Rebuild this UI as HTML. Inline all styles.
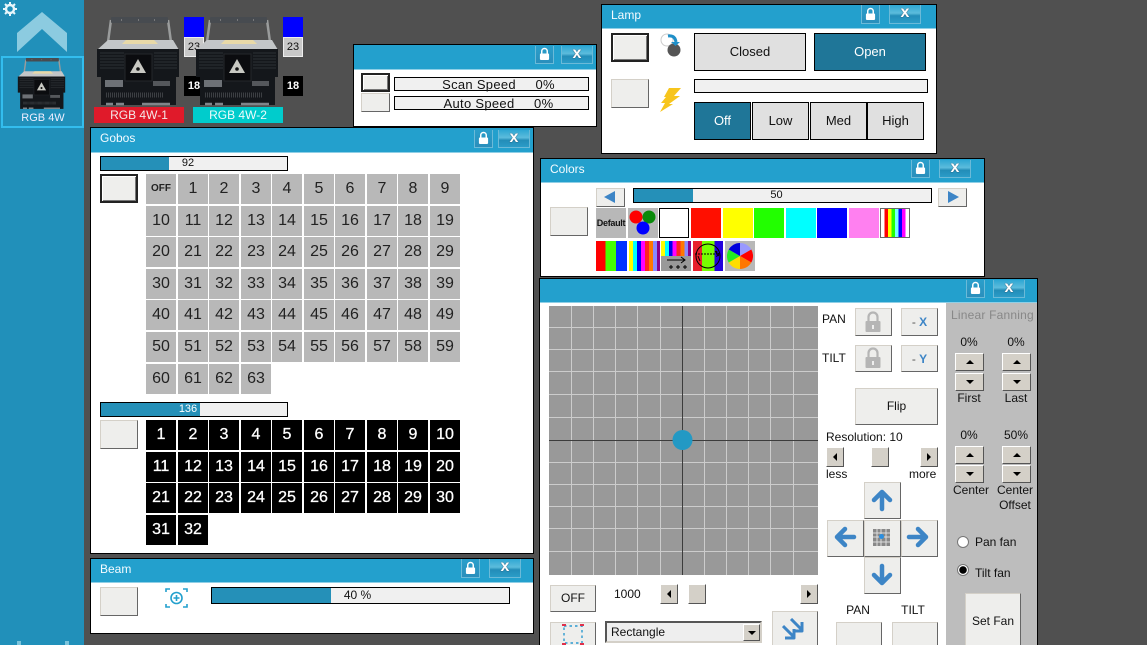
<!DOCTYPE html>
<html><head><meta charset="utf-8"><style>
html,body{margin:0;padding:0;width:1147px;height:645px;overflow:hidden;background:#505050}
body{position:relative;font-family:"Liberation Sans",sans-serif;font-size:12px;color:#111}
#r{position:absolute;left:0;top:0;width:1147px;height:645px;overflow:hidden}
#r div,#r span,#r svg{position:absolute;box-sizing:border-box;display:block}
#r .g{display:grid}
#r .g div{position:static}
.w{background:#fff;border:1px solid #000}
.t{background:#23a0cd;border-bottom:1px solid #8fcfe6;color:#f4fbff;font-size:12px;padding:2px 0 0 9px;line-height:16px}
.lk{background:linear-gradient(#2a9fcb,#2a8fbc);border:1px solid #6bbad8;border-top:0}
.cl{background:linear-gradient(#2ea7d3 0,#5cbcdc 45%,#238db8 60%,#2a9cc8);border:1px solid #6bbad8;border-top:0;color:#fff;font:bold 16px/16px "Liberation Sans",sans-serif;text-align:center;text-shadow:0 0 1px #223}
.b{background:#eeeeec;border:1px solid;border-color:#d4d0c8 #666 #666 #d4d0c8;text-align:center}
.bs{background:#eeeeec;border:2px solid #222;box-shadow:inset 1px 1px 0 #fff,inset -1px -1px 0 #777}
.sl{background:#f0f0f0;border:1px solid #000;text-align:center;font-size:11px;line-height:13px}
.sl i{position:absolute;left:0;top:0;bottom:0;background:#2590b8;display:block}
.sl span{left:0;right:12px;top:0}
.g{text-align:center}
.g div{width:30px;height:30px;font-size:16px;line-height:29px}
.gy div{background:#b8b8b8;color:#222}
.bk div{background:#000;color:#fff;-webkit-text-stroke:.3px #fff}
.tb{border:1px solid #000;background:#e0e0e0;text-align:center;font-size:13px}
.on{background:#1f7698;color:#fff}
.s{width:30px;height:30px}
.mn{background:#d4d0c8;border:1px solid;border-color:#fff #555 #555 #fff}
.up::after,.dn::after,.lf::after,.rt::after{content:"";position:absolute;left:50%;top:50%;width:0;height:0;border:4px solid transparent}
.up::after{margin:-6px 0 0 -4px;border-bottom-color:#000}
.dn::after{margin:-2px 0 0 -4px;border-top-color:#000}
.lf::after{margin:-4px 0 0 -6px;border-right-color:#000}
.rt::after{margin:-4px 0 0 -2px;border-left-color:#000}
.l{white-space:nowrap;line-height:14px}
.c{text-align:center}
</style></head><body><div id="r">
<svg width="0" height="0" style="left:0;top:0"><defs>
<symbol id="dev" viewBox="0 0 84 90">
<path d="M15 3L12 25M72 3L75 25" fill="none" stroke="#9a9c9c" stroke-width="2.500"/>
<rect x="15" y="0" width="57" height="6" rx="1" fill="#474b50"/>
<path d="M25 3h1M42 3h1M58 3h1" stroke="#888" stroke-width="1.500"/>
<path d="M12 23H77L83 33H1Z" fill="#c3c6c8"/>
<path d="M30 23H58L62 27H26Z" fill="#e8d9a8"/>
<path d="M1 32H83V60H80V88H5V60H1Z" fill="#14171b"/>
<path d="M4 36H28M4 39H28M4 42H28M4 45H28M4 48H28M4 51H28M58 36H81M58 39H81M58 42H81M58 45H81M58 48H81M58 51H81" stroke="#2d3035" stroke-width="1"/>
<rect x="29" y="37" width="27" height="27" fill="#0b0c0f" stroke="#25272b"/>
<path d="M42 42L50 56H34Z" fill="#c8c8c2"/>
<circle cx="42" cy="52" r="1.800" fill="#111"/>
<path d="M9 63h18v7h-18z" fill="#6d7176"/>
<path d="M57 64h17v5h-17z" fill="#54575b"/>
<path d="M10 78H68" stroke="#3c3f43" stroke-width="5" stroke-dasharray="1 1"/>
<path d="M10 87h7M20 87h8M46 87h28" stroke="#80858a" stroke-width="2.500"/>
</symbol>
<symbol id="lock" viewBox="0 0 12 15"><path d="M3 7V4.500a3 3 0 0 1 6 0V7" fill="none" stroke="#fff" stroke-width="1.600"/><rect x="1" y="7" width="10" height="7" rx="1" fill="#fff"/></symbol>
<symbol id="glock" viewBox="0 0 16 22"><path d="M3.500 10V6a4.500 4.500 0 0 1 9 0v4" fill="none" stroke="#b5b5b5" stroke-width="2.200"/><rect x="0.500" y="10" width="15" height="11" rx="1" fill="#b5b5b5"/><rect x="7" y="14" width="2" height="4" fill="#eee"/></symbol>
<symbol id="au" viewBox="0 0 24 24"><path d="M12 21V5M4 12L12 4L20 12" fill="none" stroke="#3d85c6" stroke-width="4.500" stroke-linecap="round" stroke-linejoin="round"/></symbol>
</defs></svg>

<!-- sidebar -->
<div style="left:0;top:0;width:84px;height:645px;background:#2190ba"></div>
<svg style="left:3px;top:2px" width="14" height="14" viewBox="0 0 14 14"><circle cx="7" cy="7" r="4" fill="none" stroke="#e8f6fb" stroke-width="2.400"/><path d="M7 0V3M7 11V14M0 7H3M11 7H14M2 2L4 4M10 10L12 12M12 2L10 4M4 10L2 12" stroke="#e8f6fb" stroke-width="2"/></svg>
<svg style="left:17px;top:11px" width="51" height="42" viewBox="0 0 51 42"><path d="M0 22L25 1L50 22V41L25 18L0 41Z" fill="#8ccbe0"/></svg>
<div style="left:1px;top:56px;width:83px;height:72px;border:2px solid #33bdee"></div>
<svg style="left:13px;top:58px" width="57" height="52"><use href="#dev" width="57" height="52"/></svg>
<div class="l c" style="left:1px;top:111px;width:84px;color:#eef;font-size:11px">RGB 4W</div>
<div style="left:17px;top:641px;width:4px;height:4px;background:#7cc4dc"></div>
<div style="left:65px;top:641px;width:4px;height:4px;background:#7cc4dc"></div>

<!-- fixtures -->
<div style="left:184px;top:17px;width:20px;height:20px;background:#0000ff"></div>
<div class="c" style="left:184px;top:37px;width:20px;height:20px;background:#c8c8c8;border:1px solid #eee;line-height:19px;font-size:11px">23</div>
<div class="c" style="left:184px;top:76px;width:20px;height:20px;background:#000;color:#fff;line-height:20px;font-size:11px;font-weight:bold">18</div>
<div style="left:283px;top:17px;width:20px;height:20px;background:#0000ff"></div>
<div class="c" style="left:283px;top:37px;width:20px;height:20px;background:#c8c8c8;border:1px solid #eee;line-height:19px;font-size:11px">23</div>
<div class="c" style="left:283px;top:76px;width:20px;height:20px;background:#000;color:#fff;line-height:20px;font-size:11px;font-weight:bold">18</div>
<svg style="left:96px;top:17px" width="84" height="90"><use href="#dev" width="84" height="90"/></svg>
<svg style="left:195px;top:17px" width="84" height="90"><use href="#dev" width="84" height="90"/></svg>
<div class="c" style="left:94px;top:107px;width:90px;height:16px;background:#e01a2a;color:#f4e8e8;line-height:16px;font-size:12px">RGB 4W-1</div>
<div class="c" style="left:193px;top:107px;width:90px;height:16px;background:#00cccc;color:#effcfc;line-height:16px;font-size:12px">RGB 4W-2</div>

<!-- speed -->
<div class="w" style="left:353px;top:44px;width:244px;height:83px"></div>
<div class="t" style="left:354px;top:45px;width:242px;height:25px"></div>
<div class="lk" style="left:535px;top:46px;width:19px;height:18px"></div><svg style="left:539px;top:47px" width="11" height="14"><use href="#lock" width="11" height="14"/></svg>
<div class="cl" style="left:561px;top:46px;width:32px;height:18px">x</div>
<div class="bs" style="left:361px;top:73px;width:29px;height:19px"></div>
<div class="b" style="left:361px;top:93px;width:29px;height:19px"></div>
<div class="sl" style="left:394px;top:77px;width:195px;height:14px;font-size:13px;line-height:14px;letter-spacing:.3px;padding-left:14px">Scan Speed &nbsp;&nbsp;&nbsp; 0%</div>
<div class="sl" style="left:394px;top:96px;width:195px;height:14px;font-size:13px;line-height:14px;letter-spacing:.3px;padding-left:14px">Auto Speed &nbsp;&nbsp;&nbsp; 0%</div>

<!-- lamp -->
<div class="w" style="left:601px;top:4px;width:336px;height:150px"></div>
<div class="t" style="left:602px;top:5px;width:334px;height:24px">Lamp</div>
<div class="lk" style="left:861px;top:5px;width:19px;height:19px"></div><svg style="left:865px;top:7px" width="11" height="14"><use href="#lock" width="11" height="14"/></svg>
<div class="cl" style="left:889px;top:5px;width:32px;height:19px">x</div>
<div class="bs" style="left:611px;top:33px;width:38px;height:29px"></div>
<div class="b" style="left:611px;top:79px;width:38px;height:29px"></div>
<svg style="left:657px;top:32px" width="26" height="26"><circle cx="10" cy="8" r="6" fill="#fff" stroke="#ccc"/><circle cx="17" cy="18" r="6.500" fill="#555"/><path d="M11 4Q18 3 19 10" fill="none" stroke="#1f8fc8" stroke-width="3"/><path d="M14 10h9l-4.500 4z" fill="#1f8fc8"/></svg>
<svg style="left:659px;top:88px" width="23" height="25"><path d="M10 0H22L15 8H21L10 16H14L1 24L6 15H2L7 9H5Z" fill="#f7c51c"/></svg>
<div class="tb" style="left:694px;top:33px;width:112px;height:38px;line-height:36px">Closed</div>
<div class="tb on" style="left:814px;top:33px;width:112px;height:38px;line-height:36px">Open</div>
<div class="sl" style="left:694px;top:79px;width:234px;height:14px"></div>
<div class="tb on" style="left:694px;top:102px;width:57px;height:38px;line-height:36px">Off</div>
<div class="tb" style="left:752px;top:102px;width:57px;height:38px;line-height:36px">Low</div>
<div class="tb" style="left:810px;top:102px;width:57px;height:38px;line-height:36px">Med</div>
<div class="tb" style="left:867px;top:102px;width:57px;height:38px;line-height:36px">High</div>

<!-- gobos -->
<div class="w" style="left:90px;top:127px;width:444px;height:427px"></div>
<div class="t" style="left:91px;top:128px;width:442px;height:25px">Gobos</div>
<div class="lk" style="left:474px;top:130px;width:19px;height:18px"></div><svg style="left:478px;top:131px" width="11" height="14"><use href="#lock" width="11" height="14"/></svg>
<div class="cl" style="left:498px;top:130px;width:32px;height:18px">x</div>
<div class="sl" style="left:100px;top:156px;width:188px;height:15px"><i style="width:68px"></i><span>92</span></div>
<div class="bs" style="left:100px;top:174px;width:38px;height:29px"></div>
<div class="g gy" style="left:146px;top:174px;grid-template-columns:32px 31px 32px 31px 32px 31px 32px 31px 32px 31px;grid-template-rows:32px 31px 32px 31px 32px 32px 30px">
<div style="font:bold 10px/29px 'Liberation Sans',sans-serif">OFF</div><div>1</div><div>2</div><div>3</div><div>4</div><div>5</div><div>6</div><div>7</div><div>8</div><div>9</div>
<div>10</div><div>11</div><div>12</div><div>13</div><div>14</div><div>15</div><div>16</div><div>17</div><div>18</div><div>19</div>
<div>20</div><div>21</div><div>22</div><div>23</div><div>24</div><div>25</div><div>26</div><div>27</div><div>28</div><div>29</div>
<div>30</div><div>31</div><div>32</div><div>33</div><div>34</div><div>35</div><div>36</div><div>37</div><div>38</div><div>39</div>
<div>40</div><div>41</div><div>42</div><div>43</div><div>44</div><div>45</div><div>46</div><div>47</div><div>48</div><div>49</div>
<div>50</div><div>51</div><div>52</div><div>53</div><div>54</div><div>55</div><div>56</div><div>57</div><div>58</div><div>59</div>
<div>60</div><div>61</div><div>62</div><div>63</div>
</div>
<div class="sl" style="left:100px;top:402px;width:188px;height:15px;color:#fff"><i style="width:99px"></i><span>136</span></div>
<div class="b" style="left:100px;top:420px;width:38px;height:29px"></div>
<div class="g bk" style="left:146px;top:420px;grid-template-columns:32px 31px 32px 31px 32px 31px 32px 31px 32px 31px;grid-template-rows:32px 31px 32px 30px">
<div>1</div><div>2</div><div>3</div><div>4</div><div>5</div><div>6</div><div>7</div><div>8</div><div>9</div><div>10</div>
<div>11</div><div>12</div><div>13</div><div>14</div><div>15</div><div>16</div><div>17</div><div>18</div><div>19</div><div>20</div>
<div>21</div><div>22</div><div>23</div><div>24</div><div>25</div><div>26</div><div>27</div><div>28</div><div>29</div><div>30</div>
<div>31</div><div>32</div>
</div>

<!-- beam -->
<div class="w" style="left:90px;top:558px;width:444px;height:76px"></div>
<div class="t" style="left:91px;top:559px;width:442px;height:24px">Beam</div>
<div class="lk" style="left:461px;top:559px;width:19px;height:19px"></div><svg style="left:465px;top:561px" width="11" height="14"><use href="#lock" width="11" height="14"/></svg>
<div class="cl" style="left:489px;top:559px;width:32px;height:19px">x</div>
<div class="b" style="left:100px;top:587px;width:38px;height:29px"></div>
<svg style="left:165px;top:588px" width="23" height="20" fill="none" stroke="#23a0cd" stroke-width="1.600"><circle cx="11.500" cy="10" r="5.500"/><path d="M8.500 10H14.500M11.500 7V13M1 4V1H5M18 1H22V4M1 16V19H5M18 19H22V16"/></svg>
<div class="sl" style="left:211px;top:587px;width:299px;height:17px;font-size:12px;line-height:15px"><i style="width:119px"></i><span style="right:6px">40 %</span></div>

<!-- colors -->
<div class="w" style="left:540px;top:158px;width:445px;height:119px"></div>
<div class="t" style="left:541px;top:159px;width:443px;height:24px">Colors</div>
<div class="lk" style="left:911px;top:160px;width:19px;height:18px"></div><svg style="left:915px;top:161px" width="11" height="14"><use href="#lock" width="11" height="14"/></svg>
<div class="cl" style="left:939px;top:160px;width:32px;height:18px">x</div>
<div class="b" style="left:550px;top:207px;width:38px;height:29px"></div>
<div class="b" style="left:596px;top:188px;width:29px;height:19px"></div><svg style="left:604px;top:191px" width="12" height="12"><path d="M11 0V12L0 6Z" fill="#3d85c6"/></svg>
<div class="sl" style="left:633px;top:188px;width:299px;height:15px"><i style="width:59px"></i><span>50</span></div>
<div class="b" style="left:938px;top:188px;width:29px;height:19px"></div><svg style="left:948px;top:191px" width="12" height="12"><path d="M0 0V12L11 6Z" fill="#3d85c6"/></svg>
<div class="s c" style="left:596px;top:208px;background:#b8b8b8;font:bold 9px/30px 'Liberation Sans',sans-serif;letter-spacing:-.3px">Default</div>
<svg class="s" style="left:628px;top:208px;background:#b8b8b8" width="30" height="30"><circle cx="8" cy="9" r="6.500" fill="#f00"/><circle cx="21" cy="9" r="6.500" fill="#0a8a0a"/><circle cx="15" cy="20" r="6.500" fill="#0000ff"/></svg>
<div class="s" style="left:659px;top:208px;background:#fff;border:1px solid #000"></div>
<div class="s" style="left:691px;top:208px;background:#ff0f00"></div>
<div class="s" style="left:723px;top:208px;background:#ff0"></div>
<div class="s" style="left:754px;top:208px;background:#22ff00"></div>
<div class="s" style="left:786px;top:208px;background:#0ff"></div>
<div class="s" style="left:817px;top:208px;background:#00f"></div>
<div class="s" style="left:849px;top:208px;background:#ff80f0"></div>
<div class="s" style="left:880px;top:208px;border:1px solid #666;background:linear-gradient(90deg,#fff 12%,#f00 12% 25%,#ff0 25% 38%,#2f0 38% 50%,#7ff 50% 63%,#00f 63% 75%,#f0f 75% 87%,#fff 87%)"></div>
<div class="s" style="left:596px;top:241px;width:31px;background:linear-gradient(90deg,#f00 30%,#4f0 30% 65%,#03f 65%)"></div>
<div class="s" style="left:629px;top:241px;width:31px;background:linear-gradient(90deg,#ff0 0 13%,#0ff 13% 26%,#00e 26% 39%,#f0f 39% 52%,#f22 52% 65%,#f70 65% 78%,#88f 78% 90%,#808 90%)"></div>
<div class="s" style="left:661px;top:241px;background:linear-gradient(90deg,#ff0 0 13%,#0ff 13% 26%,#00e 26% 39%,#f0f 39% 52%,#f22 52% 65%,#f70 65% 78%,#88f 78% 90%,#808 90%)"></div>
<div style="left:661px;top:256px;width:30px;height:15px;background:#999"></div>
<svg style="left:661px;top:256px" width="30" height="15"><path d="M6 4H24M20 1L24 4L20 7M8 11H12M10 9V13M15 11H19M17 9V13M22 11H26M24 9V13" fill="none" stroke="#000"/></svg>
<div class="s" style="left:693px;top:241px;background:linear-gradient(90deg,#e8202c 30%,#7f0 30% 72%,#2200dd 72%)"></div>
<svg style="left:693px;top:241px" width="30" height="30" fill="none" stroke="#000"><circle cx="15" cy="15" r="12"/><path d="M2 13H26M23 10L26 13L23 16" stroke-dasharray="2 1"/><path d="M22 10L26 15M5 15L7 20"/></svg>
<svg class="s" style="left:725px;top:241px;background:#b8b8b8" width="30" height="30" viewBox="-15 -15 30 30"><path d="M0 0L0-13A13 13 0 0 1 11.300-6.500Z" fill="#99f"/><path d="M0 0L11.300-6.500A13 13 0 0 1 11.300 6.500Z" fill="#f00"/><path d="M0 0L11.300 6.500A13 13 0 0 1 0 13Z" fill="#f70"/><path d="M0 0L0 13A13 13 0 0 1-11.300 6.500Z" fill="#fd0"/><path d="M0 0L-11.300 6.500A13 13 0 0 1-11.300-6.500Z" fill="#2e2"/><path d="M0 0L-11.300-6.500A13 13 0 0 1 0-13Z" fill="#00d"/></svg>

<!-- position -->
<div class="w" style="left:539px;top:278px;width:499px;height:380px"></div>
<div class="t" style="left:540px;top:279px;width:497px;height:24px"></div>
<div class="lk" style="left:966px;top:280px;width:19px;height:18px"></div><svg style="left:970px;top:281px" width="11" height="14"><use href="#lock" width="11" height="14"/></svg>
<div class="cl" style="left:993px;top:280px;width:32px;height:18px">x</div>
<svg style="left:549px;top:306px" width="269" height="269" shape-rendering="crispEdges"><rect width="269" height="269" fill="#999"/><g stroke="#cccccc" stroke-width="1"><path d="M22.500 0V269M44.500 0V269M66.500 0V269M88.500 0V269M111.500 0V269M155.500 0V269M177.500 0V269M199.500 0V269M221.500 0V269M244.500 0V269M0 21.500H269M0 43.500H269M0 65.500H269M0 88.500H269M0 111.500H269M0 156.500H269M0 178.500H269M0 200.500H269M0 222.500H269M0 245.500H269"/></g><path d="M133.500 0V269M0 134.500H269" stroke="#3c3c3c" stroke-width="1"/><circle cx="133.500" cy="134" r="10" fill="#2399c4" shape-rendering="auto"/></svg>

<div class="l" style="left:822px;top:312px;font-size:12px">PAN</div>
<div class="b" style="left:855px;top:308px;width:37px;height:28px"></div><svg style="left:865px;top:311px" width="16" height="22"><use href="#glock" width="16" height="22"/></svg>
<div class="b" style="left:901px;top:308px;width:37px;height:28px;color:#3d85c6;line-height:27px;font-weight:bold"><span style="position:static;font-weight:normal;color:#555;display:inline">- </span>X</div>
<div class="l" style="left:822px;top:351px;font-size:12px">TILT</div>
<div class="b" style="left:855px;top:345px;width:37px;height:27px"></div><svg style="left:865px;top:347px" width="16" height="22"><use href="#glock" width="16" height="22"/></svg>
<div class="b" style="left:901px;top:345px;width:37px;height:27px;color:#3d85c6;line-height:26px;font-weight:bold"><span style="position:static;font-weight:normal;color:#555;display:inline">- </span>Y</div>
<div class="b" style="left:855px;top:388px;width:83px;height:37px;line-height:35px">Flip</div>
<div class="l" style="left:826px;top:430px">Resolution: 10</div>
<div class="mn lf" style="left:826px;top:447px;width:18px;height:20px"></div>
<div class="mn" style="left:871px;top:447px;width:18px;height:20px"></div>
<div class="mn rt" style="left:920px;top:447px;width:18px;height:20px"></div>
<div class="l" style="left:826px;top:467px">less</div>
<div class="l" style="left:909px;top:467px">more</div>

<div class="b" style="left:864px;top:482px;width:37px;height:37px"></div><svg style="left:870px;top:488px" width="24" height="24"><use href="#au" width="24" height="24"/></svg>
<div class="b" style="left:827px;top:520px;width:37px;height:37px"></div><svg style="left:833px;top:525px;transform:rotate(-90deg)" width="24" height="24"><use href="#au" width="24" height="24"/></svg>
<div class="b" style="left:864px;top:520px;width:37px;height:37px"></div>
<svg style="left:873px;top:529px" width="17" height="17"><path d="M0 0H17V17H0Z" fill="#888"/><path d="M4 0V17M8 0V17M13 0V17M0 4H17M0 8H17M0 13H17" stroke="#ddd"/><circle cx="8.500" cy="7.500" r="2.500" fill="#2b8fe0"/></svg>
<div class="b" style="left:901px;top:520px;width:37px;height:37px"></div><svg style="left:906px;top:525px;transform:rotate(90deg)" width="24" height="24"><use href="#au" width="24" height="24"/></svg>
<div class="b" style="left:864px;top:557px;width:37px;height:37px"></div><svg style="left:870px;top:563px;transform:rotate(180deg)" width="24" height="24"><use href="#au" width="24" height="24"/></svg>

<div class="b" style="left:550px;top:585px;width:46px;height:27px;line-height:25px">OFF</div>
<div class="l" style="left:614px;top:587px">1000</div>
<div class="mn lf" style="left:660px;top:584px;width:18px;height:20px"></div>
<div class="mn" style="left:688px;top:584px;width:18px;height:20px"></div>
<div class="mn rt" style="left:800px;top:584px;width:18px;height:20px"></div>
<div class="b" style="left:550px;top:622px;width:46px;height:30px"></div>
<svg style="left:562px;top:624px" width="22" height="21"><rect x="2" y="2" width="18" height="17" fill="none" stroke="#2b9ad0" stroke-width="1.400" stroke-dasharray="2.500 3"/><path d="M0 1h4M18 1h4M0 20h4M18 20h4" stroke="#e0304a" stroke-width="2"/></svg>
<div style="left:605px;top:621px;width:157px;height:22px;background:#eee;border:2px solid;border-color:#555 #d4d0c8 #d4d0c8 #555;line-height:18px;padding-left:4px">Rectangle</div>
<div class="mn dn" style="left:743px;top:624px;width:17px;height:17px"></div>
<div class="b" style="left:772px;top:611px;width:46px;height:40px"></div>
<svg style="left:782px;top:618px" width="24" height="24" fill="none" stroke="#3d85c6" stroke-width="3" stroke-linejoin="round"><path d="M9 1L20 12M20 4V13H11M1 8L12 19M12 11V20H3"/></svg>
<div class="l c" style="left:835px;top:603px;width:46px">PAN</div>
<div class="l c" style="left:890px;top:603px;width:46px">TILT</div>
<div class="b" style="left:836px;top:622px;width:46px;height:30px"></div>
<div class="b" style="left:892px;top:622px;width:46px;height:30px"></div>

<!-- fanning -->
<div style="left:946px;top:303px;width:91px;height:342px;background:#bdbdbd"></div>
<div class="l" style="left:951px;top:308px;color:#888;letter-spacing:.2px">Linear Fanning</div>
<div class="l c" style="left:949px;top:335px;width:40px">0%</div>
<div class="l c" style="left:996px;top:335px;width:40px">0%</div>
<div class="mn up" style="left:955px;top:353px;width:29px;height:18px"></div>
<div class="mn dn" style="left:955px;top:373px;width:29px;height:18px"></div>
<div class="mn up" style="left:1002px;top:353px;width:29px;height:18px"></div>
<div class="mn dn" style="left:1002px;top:373px;width:29px;height:18px"></div>
<div class="l c" style="left:949px;top:391px;width:40px">First</div>
<div class="l c" style="left:996px;top:391px;width:40px">Last</div>
<div class="l c" style="left:949px;top:428px;width:40px">0%</div>
<div class="l c" style="left:996px;top:428px;width:40px">50%</div>
<div class="mn up" style="left:955px;top:446px;width:29px;height:18px"></div>
<div class="mn dn" style="left:955px;top:465px;width:29px;height:18px"></div>
<div class="mn up" style="left:1002px;top:446px;width:29px;height:18px"></div>
<div class="mn dn" style="left:1002px;top:465px;width:29px;height:18px"></div>
<div class="l c" style="left:951px;top:483px;width:40px">Center</div>
<div class="l c" style="left:995px;top:483px;width:40px">Center</div>
<div class="l c" style="left:995px;top:498px;width:40px">Offset</div>
<div style="left:957px;top:536px;width:12px;height:12px;border-radius:50%;background:#fff;border:1px solid #777"></div>
<div class="l" style="left:975px;top:535px">Pan fan</div>
<div style="left:957px;top:564px;width:12px;height:12px;border-radius:50%;background:radial-gradient(#000 3.500px,#fff 4px);border:1px solid #777"></div>
<div class="l" style="left:975px;top:566px">Tilt fan</div>
<div class="b" style="left:965px;top:593px;width:56px;height:60px;line-height:54px">Set Fan</div>
</div></body></html>
